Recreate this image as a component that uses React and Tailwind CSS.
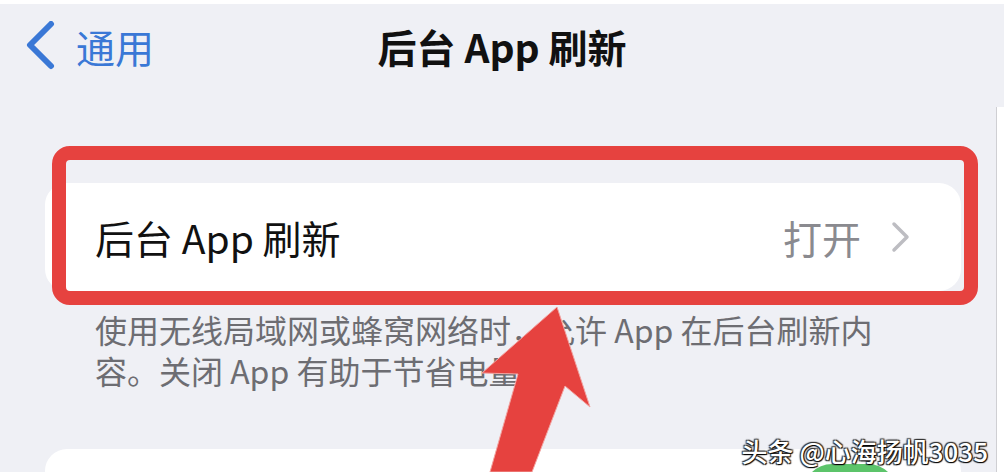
import React from 'react'

const font = "font-['Noto_Sans_CJK_SC','Noto_Sans',sans-serif]"

function BackChevron() {
  return (
    <svg width="30" height="50" viewBox="0 0 30 50" className="shrink-0">
      <path d="M25 3 L4 24 L25 45" fill="none" stroke="#3a78d6" strokeWidth="6" strokeLinecap="round" strokeLinejoin="round" />
    </svg>
  )
}

function RowChevron() {
  return (
    <svg width="20" height="32" viewBox="0 0 20 32">
      <path d="M3 3 L16 16 L3 29" fill="none" stroke="#bdbdc2" strokeWidth="3.5" strokeLinecap="round" strokeLinejoin="round" />
    </svg>
  )
}

export default function App() {
  return (
    <div className={`${font} relative flex w-[1004px] h-[472px] overflow-hidden bg-[#eff0f5] border-t-4 border-white`}>
      <div className="w-[996px] shrink-0">
        {/* 导航栏 */}
        <div className="grid grid-cols-[1fr_auto_1fr] items-center h-[84px]">
          <div className="flex items-center pl-[26px] gap-[20px]">
            <BackChevron />
            <span className="text-[39px] leading-none text-[#3a78d6]">通用</span>
          </div>
          <h1 className="ml-[8px] text-[39px] leading-none font-bold text-[#111]">后台 App 刷新</h1>
          <div />
        </div>

        {/* 设置项 */}
        <div className="mt-[95px] ml-[45px] w-[916px] h-[108px] rounded-[22px] bg-white flex items-center justify-between pl-[50px] pr-[50px]">
          <span className="text-[39px] leading-none text-[#111]">后台 App 刷新</span>
          <div className="flex items-center gap-[30px]">
            <span className="text-[39px] leading-none text-[#8a8a8f]">打开</span>
            <RowChevron />
          </div>
        </div>

        <div className="mt-[18px] pl-[95px] text-[32px] text-[#6d6d72]">
          <div className="h-[41px] leading-[41px]">使用无线局域网或蜂窝网络时，允许 App 在后台刷新内</div>
          <div className="h-[41px] leading-[41px]">容。关闭 App 有助于节省电量。</div>
        </div>

        <div className="mt-[58px] ml-[45px] w-[916px] h-[120px] rounded-t-[22px] bg-white flex justify-end pr-[64px] pt-[15px]">
          <div className="w-[94px] h-[58px] rounded-full bg-[#5cc46a]" />
        </div>
      </div>

      {/* 右侧边框 */}
      <div className="flex-1 flex flex-col">
        <div className="h-[103px]" />
        <div className="flex-1 bg-white border-l border-[#cfcfd3]" />
      </div>

      {/* 红色标注框 */}
      <div className="absolute left-[52px] top-[142px] w-[926px] h-[159px] rounded-[18px] border-[14px] border-[#e6423f]" />

      {/* 红色箭头 */}
      <svg className="absolute left-0 top-[-4px] pointer-events-none" width="1004" height="472" viewBox="0 0 1004 472">
        <polygon points="557,307 590,407 565,386 532,472 490,472 518,374 482,373" fill="#e6423f" stroke="#f2a3a0" strokeWidth="1" />
      </svg>

      {/* 水印 */}
      <div className="absolute right-[16px] bottom-[8px] text-[26px] leading-none font-medium text-white [text-shadow:1px_1px_1px_#000,-1px_-1px_1px_#333,1px_-1px_1px_#333,-1px_1px_1px_#333]">
        头条 @心海扬帆3035
      </div>
    </div>
  )
}
